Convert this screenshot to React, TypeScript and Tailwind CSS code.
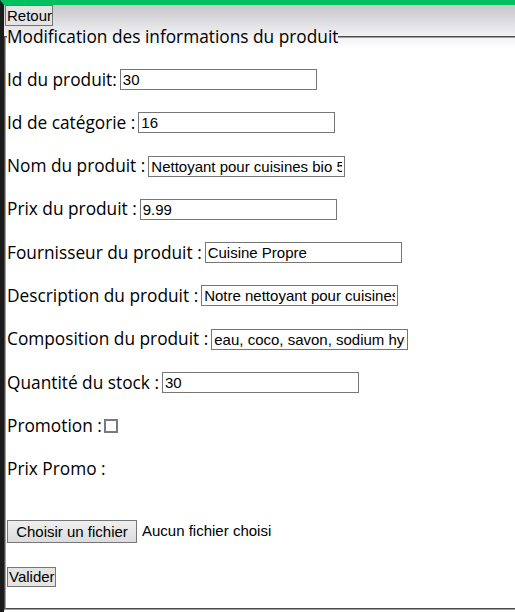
import React from "react";

// Formulaire de modification produit (reproduction écran)

const labelFont = "font-['Open_Sans','Noto_Sans',sans-serif] text-[17.3px] text-black";
const fieldFont = "font-['Liberation_Sans',Arial,sans-serif] text-[15px] text-black";

interface Field {
  label: string;
  value: string;
}

const fields: Field[] = [
  { label: "Id du produit:", value: "30" },
  { label: "Id de catégorie :", value: "16" },
  { label: "Nom du produit :", value: "Nettoyant pour cuisines bio 500ml" },
  { label: "Prix du produit :", value: "9.99" },
  { label: "Fournisseur du produit :", value: "Cuisine Propre" },
  { label: "Description du produit :", value: "Notre nettoyant pour cuisines bio" },
  { label: "Composition du produit :", value: "eau, coco, savon, sodium hydroxyde" },
  { label: "Quantité du stock :", value: "30" },
];

function Row({ children }: { children: React.ReactNode }) {
  return <div className="flex h-[26px] items-center">{children}</div>;
}

export default function App() {
  return (
    <div className="min-h-[612px] w-[515px] overflow-hidden border-l-4 border-t-[5px] border-l-[#1b1b1b] border-t-[#00c060] bg-[linear-gradient(to_bottom,#c6c6cb_0px,#eeeef0_28px,#ffffff_44px)]">
      <button
        type="button"
        className={`${fieldFont} ml-px block h-[21px] w-[48px] border border-[#767676] bg-[#e4e4e4] px-px text-[15.5px] leading-none`}
      >
        Retour
      </button>

      <fieldset className="m-0 min-h-[584px] w-[540px] border-2 border-[#a0a0a0] p-0 px-px [border-style:groove]">
        <legend className={`${labelFont} px-0 leading-[22px]`}>
          Modification des informations du produit
        </legend>

        <div className="mt-[18.5px] flex flex-col gap-[17.3px]">
          {fields.map((f) => (
            <Row key={f.label}>
              <span className={`${labelFont} mr-[-1.5px] whitespace-pre`}>{f.label + " "}</span>
              <input
                readOnly
                value={f.value}
                className={`${fieldFont} h-[21px] w-[197px] border border-[#767676] bg-white px-[2px] py-px leading-[17px] outline-none`}
              />
            </Row>
          ))}
          <Row>
            <span className={`${labelFont} whitespace-pre`}>Promotion : </span>
            <span className="ml-[-2px] block h-[14px] w-[14px] border-2 border-[#7a7a7a] bg-white" />
          </Row>
          <Row>
            <span className={labelFont}>Prix Promo :</span>
          </Row>
        </div>

        <div className="mt-[38px] flex h-[23px] items-center gap-[5px]">
          <button
            type="button"
            className={`${fieldFont} h-[23px] w-[130px] border border-[#767676] bg-[linear-gradient(to_bottom,#efefef,#dcdcdc)] leading-none`}
          >
            Choisir un fichier
          </button>
          <span className={fieldFont}>Aucun fichier choisi</span>
        </div>

        <div className="mt-[21px] pb-[19px]">
          <button
            type="button"
            className={`${fieldFont} h-[20px] w-[49px] border border-[#767676] bg-[#e4e4e4] px-px leading-none`}
          >
            Valider
          </button>
        </div>
      </fieldset>
    </div>
  );
}
